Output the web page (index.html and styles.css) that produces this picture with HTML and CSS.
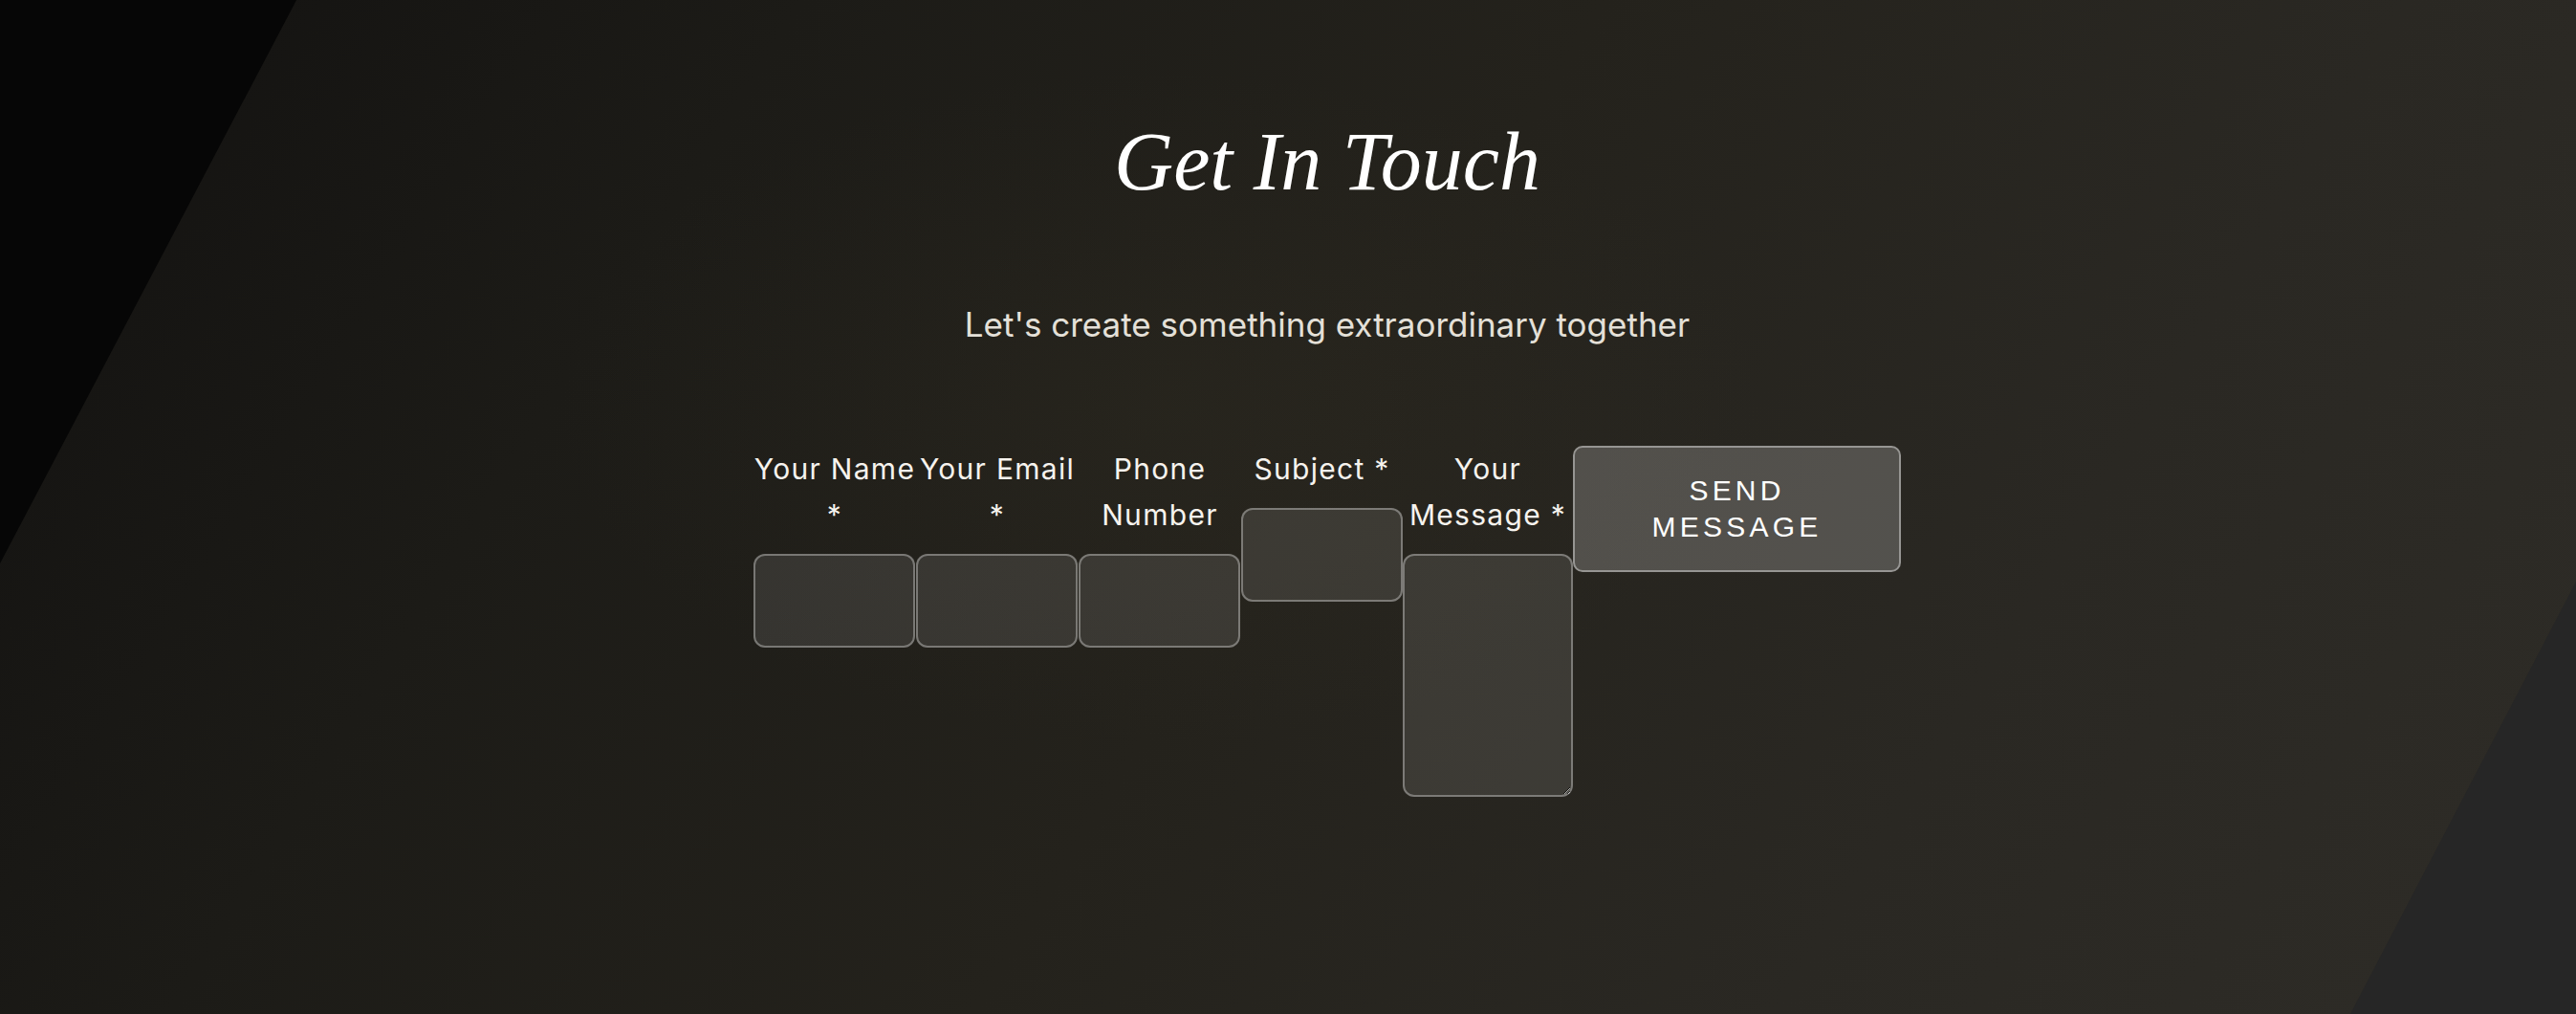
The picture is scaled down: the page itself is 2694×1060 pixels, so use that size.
FILE: index.html
```html
<!DOCTYPE html>
<html lang="en">
<head>
<meta charset="utf-8">
<title>Get In Touch</title>
<link rel="stylesheet" href="styles.css">
</head>
<body>
<main class="contact">
  <h1 class="contact-title">Get In Touch</h1>
  <p class="contact-subtitle">Let's create something extraordinary together</p>
  <form class="contact-form">
    <div class="form-group group-name">
      <label class="form-label" for="name">Your Name *</label>
      <input class="form-input" id="name" type="text">
    </div>
    <div class="form-group group-email">
      <label class="form-label" for="email">Your Email *</label>
      <input class="form-input" id="email" type="email">
    </div>
    <div class="form-group group-phone">
      <label class="form-label" for="phone">Phone Number</label>
      <input class="form-input" id="phone" type="tel">
    </div>
    <div class="form-group group-subject">
      <label class="form-label" for="subject">Subject *</label>
      <input class="form-input" id="subject" type="text">
    </div>
    <div class="form-group group-message">
      <label class="form-label" for="message">Your Message *</label>
      <textarea class="form-input form-textarea" id="message"></textarea>
    </div>
    <button class="submit-btn" type="button">Send Message</button>
  </form>
</main>
</body>
</html>
```

FILE: styles.css
```css
* {
  box-sizing: border-box;
}

html, body {
  margin: 0;
  height: 100%;
}

body {
  position: relative;
  overflow: hidden;
  min-height: 1060px;
  font-family: Inter, "Noto Sans", sans-serif;
  color: #fff;
  background:
    radial-gradient(ellipse 900px 500px at 45% 40%, rgba(60, 55, 40, 0.18), rgba(60, 55, 40, 0) 70%),
    linear-gradient(122deg, #121110 0%, #1c1b17 25%, #24221c 50%, #2a2823 75%, #2e2c27 100%);
}

body::before {
  content: "";
  position: absolute;
  left: 0;
  top: 0;
  width: 310px;
  height: 589px;
  background: #060606;
  clip-path: polygon(0 0, 100% 0, 0 100%);
}

body::after {
  content: "";
  position: absolute;
  right: 0;
  bottom: 0;
  width: 236px;
  height: 452px;
  background: #262626;
  clip-path: polygon(100% 0, 100% 100%, 0 100%);
}

.contact {
  position: relative;
  z-index: 1;
  display: flex;
  flex-direction: column;
  align-items: center;
  padding: 118px 0 0 82px;
}

.contact-title {
  margin: 0;
  font-family: "Liberation Serif", "Times New Roman", serif;
  font-style: italic;
  font-weight: 400;
  font-size: 86px;
  line-height: 1.2;
  color: #ffffff;
}

.contact-subtitle {
  margin: 90px 0 0;
  font-size: 35px;
  line-height: 56px;
  color: #e4e0d8;
}

.contact-form {
  display: flex;
  align-items: flex-start;
  width: 1200px;
  margin-top: 99px;
}

.form-group {
  display: flex;
  flex-direction: column;
  flex: 0 0 auto;
}

.group-name,
.group-email,
.group-phone {
  width: 170px;
}

.group-subject {
  width: 169px;
}

.group-message {
  width: 178px;
}

.form-label {
  display: block;
  margin-bottom: 17px;
  font-size: 30px;
  font-weight: 400;
  line-height: 48px;
  letter-spacing: 1.3px;
  text-align: center;
  color: #f6f3ee;
}

.form-input {
  display: block;
  width: 100%;
  height: 98px;
  margin: 0;
  padding: 16px;
  border: 2px solid rgba(255, 255, 255, 0.33);
  border-radius: 12px;
  background: rgba(255, 255, 255, 0.1);
  color: #fff;
  font: inherit;
  outline: none;
}

.group-name .form-input,
.group-email .form-input,
.group-phone .form-input {
  width: 169px;
}

.form-textarea {
  height: 254px;
  resize: both;
  color-scheme: dark;
}

.submit-btn {
  flex: 0 0 auto;
  width: 343px;
  height: 132px;
  margin: 0;
  padding: 0 40px;
  border: 2px solid rgba(255, 255, 255, 0.4);
  border-radius: 10px;
  background: rgba(255, 255, 255, 0.2);
  color: #fff;
  font-family: "Liberation Sans", Arial, sans-serif;
  font-size: 30px;
  line-height: 38px;
  letter-spacing: 4.2px;
  text-transform: uppercase;
  cursor: pointer;
}
```
